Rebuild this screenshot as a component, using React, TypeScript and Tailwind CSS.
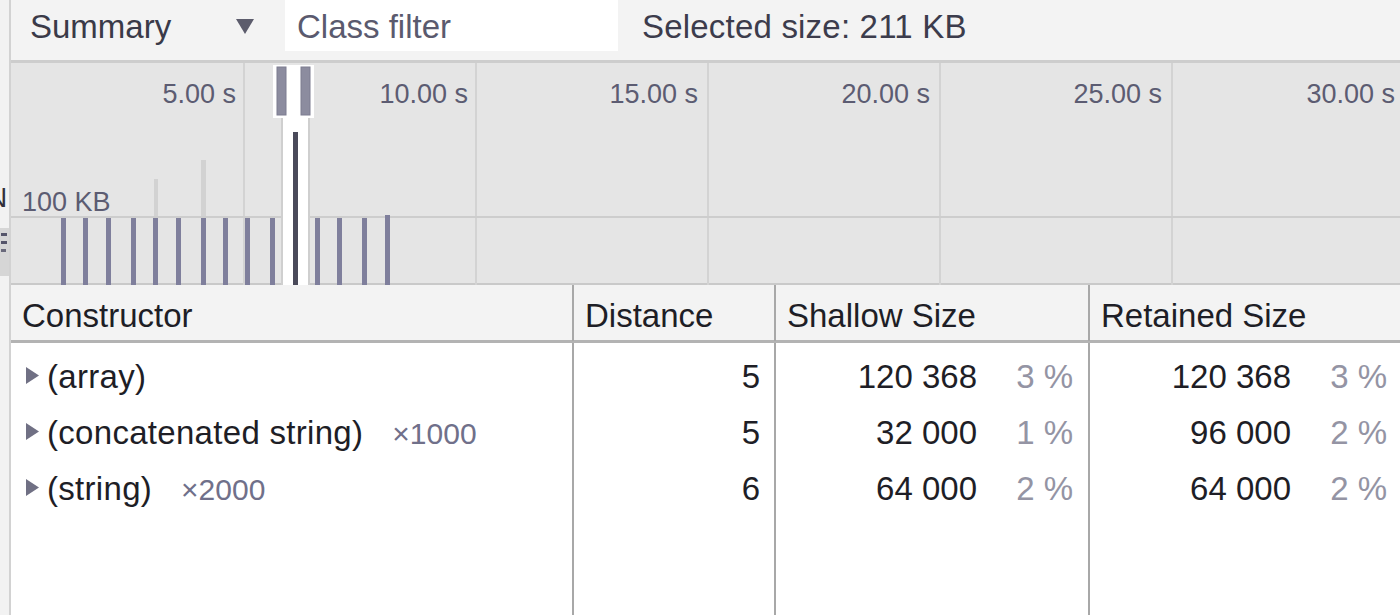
import type { ReactNode } from "react";

const bars = [50, 72, 95, 120, 142, 165, 190, 212, 234, 259, 304, 326, 351, 374];
const gridX = [232, 464, 696, 928, 1160];
const ticks = [
  { label: "5.00 s", right: 225 },
  { label: "10.00 s", right: 457 },
  { label: "15.00 s", right: 687 },
  { label: "20.00 s", right: 919 },
  { label: "25.00 s", right: 1151 },
  { label: "30.00 s", right: 1384 },
];

interface Row {
  name: string;
  count?: string;
  distance: number;
  shallow: string;
  shallowPct: string;
  retained: string;
  retainedPct: string;
}

const rows: Row[] = [
  { name: "(array)", distance: 5, shallow: "120 368", shallowPct: "3 %", retained: "120 368", retainedPct: "3 %" },
  { name: "(concatenated string)", count: "×1000", distance: 5, shallow: "32 000", shallowPct: "1 %", retained: "96 000", retainedPct: "2 %" },
  { name: "(string)", count: "×2000", distance: 6, shallow: "64 000", shallowPct: "2 %", retained: "64 000", retainedPct: "2 %" },
];

const cols = "grid grid-cols-[563px_202px_314px_1fr]";

function Expand() {
  return (
    <svg width="13" height="17" viewBox="0 0 13 17" className="shrink-0 mb-[4px]">
      <polygon points="0,0 13,8.5 0,17" fill="#707084" />
    </svg>
  );
}

function SizeCell({ value, pct, last }: { value: string; pct: string; last?: boolean }) {
  return (
    <div className={`flex items-center justify-end pt-[6px] ${last ? "pr-[13px]" : "pr-[15px] border-r-2 border-[#a8a8a8]"}`}>
      <span className="text-[#1e1e26]">{value}</span>
      <span className="w-[96px] text-right text-[#9494a4]">{pct}</span>
    </div>
  );
}

function HeaderCell({ children, last }: { children: ReactNode; last?: boolean }) {
  return (
    <div className={`flex items-center pl-[11px] pt-[6px] ${last ? "" : "border-r-2 border-[#a8a8a8]"}`}>
      {children}
    </div>
  );
}

function Timeline() {
  return (
    <div className="relative h-[222px] bg-[#e5e5e5] border-b-2 border-[#c9c9c9]">
      <svg width="1389" height="222" className="absolute left-0 top-0">
        {gridX.map((x) => (
          <rect key={x} x={x} y={0} width={2} height={222} fill="#d3d3d3" />
        ))}
        <rect x={0} y={153} width={1389} height={2} fill="#cdcdcd" />
        <rect x={143} y={116} width={4} height={37} fill="#d2d2d2" />
        <rect x={190} y={97} width={5} height={56} fill="#d2d2d2" />
        {bars.map((x, i) => (
          <rect key={x} x={x} y={i === bars.length - 1 ? 152 : 155} width={5} height={70} fill="#7f7f9c" />
        ))}
        {/* selection window */}
        <rect x={270} y={55} width={29} height={167} fill="#ffffff" />
        <rect x={270} y={55} width={2} height={167} fill="#cfcfcf" />
        <rect x={297} y={55} width={2} height={167} fill="#cfcfcf" />
        <rect x={262} y={2} width={41} height={53} fill="#ffffff" />
        <rect x={266} y={4} width={9} height={48} fill="#8c8c9f" stroke="#7d7d90" strokeWidth={1} />
        <rect x={290} y={4} width={9} height={48} fill="#8c8c9f" stroke="#7d7d90" strokeWidth={1} />
        <rect x={282} y={69} width={5} height={153} fill="#4a4a5a" />
      </svg>
      {ticks.map((t) => (
        <div
          key={t.label}
          className="absolute top-[15px] text-[27px] leading-[32px] text-[#5c5c72] whitespace-nowrap"
          style={{ right: 1389 - t.right }}
        >
          {t.label}
        </div>
      ))}
      <div className="absolute left-[11px] top-[123px] text-[27px] leading-[32px] text-[#5c5c72]">100 KB</div>
    </div>
  );
}

export default function App() {
  return (
    <div className="w-[1400px] h-[615px] overflow-hidden flex bg-white font-['Liberation_Sans',Arial,sans-serif] text-[33px]">
      {/* cut-off side panel */}
      <div className="w-[11px] shrink-0 flex flex-col bg-[#f2f2f2] border-r-2 border-[#d2d2d2] overflow-hidden">
        <div className="h-[184px]" />
        <div className="h-[28px] text-[28px] leading-[28px] text-[#30303a] ml-[-13px]">N</div>
        <div className="h-[16px]" />
        <div className="h-[48px] bg-[#d6d6d6] flex flex-col gap-[5px] pt-[5px] pl-[1px]">
          <div className="h-[3px] w-[6px] bg-[#55556a]" />
          <div className="h-[3px] w-[6px] bg-[#55556a]" />
          <div className="h-[3px] w-[5px] bg-[#6a6a7c]" />
        </div>
      </div>

      <div className="flex-1 flex flex-col min-w-0">
        {/* toolbar */}
        <div className="h-[63px] shrink-0 bg-[#f3f3f3] border-b-[3px] border-[#cdcdcd] flex items-start">
          <div className="w-[274px] h-[51px] pl-[19px] pr-[31px] pt-[2px] flex items-center justify-between text-[#3a3a48]">
            <span>Summary</span>
            <svg width="18" height="15" viewBox="0 0 18 15">
              <polygon points="0,0 18,0 9,15" fill="#5c5c6c" />
            </svg>
          </div>
          <div className="w-[333px] h-[51px] bg-white pl-[12px] pt-[2px] flex items-center text-[#5a5a6e]">Class filter</div>
          <div className="h-[51px] ml-[24px] pt-[2px] flex items-center text-[#3c3c4c] tracking-[0.2px]">Selected size: 211 KB</div>
        </div>

        <Timeline />

        {/* table header */}
        <div className={`${cols} h-[58px] shrink-0 bg-[#f3f3f3] border-b-[3px] border-[#b3b3b3] text-[#1e1e26]`}>
          <HeaderCell>Constructor</HeaderCell>
          <HeaderCell>Distance</HeaderCell>
          <HeaderCell>Shallow Size</HeaderCell>
          <HeaderCell last>Retained Size</HeaderCell>
        </div>

        {/* table body */}
        <div className="flex-1 flex flex-col">
          <div className={`${cols} h-[3px]`}>
            <div className="border-r-2 border-[#a8a8a8]" />
            <div className="border-r-2 border-[#a8a8a8]" />
            <div className="border-r-2 border-[#a8a8a8]" />
            <div />
          </div>
          {rows.map((r) => (
            <div key={r.name} className={`${cols} h-[56px]`}>
              <div className="flex items-center pl-[15px] pt-[6px] border-r-2 border-[#a8a8a8] whitespace-nowrap">
                <Expand />
                <span className="ml-[8px] text-[#1e1e26] tracking-[0.3px]">{r.name}</span>
                {r.count && <span className="ml-[29px] text-[30px] text-[#70708a]">{r.count}</span>}
              </div>
              <div className="flex items-center justify-end pr-[14px] pt-[6px] border-r-2 border-[#a8a8a8] text-[#1e1e26]">
                {r.distance}
              </div>
              <SizeCell value={r.shallow} pct={r.shallowPct} />
              <SizeCell value={r.retained} pct={r.retainedPct} last />
            </div>
          ))}
          <div className={`${cols} flex-1`}>
            <div className="border-r-2 border-[#a8a8a8]" />
            <div className="border-r-2 border-[#a8a8a8]" />
            <div className="border-r-2 border-[#a8a8a8]" />
            <div />
          </div>
        </div>
      </div>
    </div>
  );
}
